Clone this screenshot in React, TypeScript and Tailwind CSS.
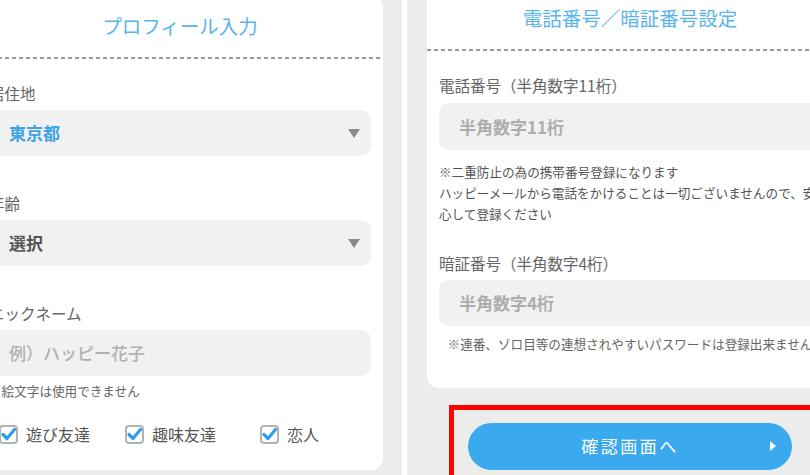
import React from "react";

const Triangle = () => (
  <svg width="12" height="9" viewBox="0 0 12 9" className="shrink-0">
    <polygon points="0,0 12,0 6,9" fill="#8a8a8a" />
  </svg>
);

const Check = ({ label, w }: { label: string; w?: string }) => (
  <div className={`flex items-center gap-[8px] shrink-0 ${w ?? ""}`}>
    <div className="relative w-[19px] h-[19px] rounded-[4px] border-2 border-[#b3b3b3] bg-white shrink-0">
      <svg width="19" height="19" viewBox="0 0 19 19" className="absolute left-[-2px] top-[-2px]">
        <polyline points="4,9.5 8,13.5 15.5,4.5" fill="none" stroke="#2e9fea" strokeWidth="3.2" strokeLinecap="round" strokeLinejoin="round" />
      </svg>
    </div>
    <span className="text-[16px] leading-[24px] text-[#555]">{label}</span>
  </div>
);

const Title = ({ text }: { text: string }) => (
  <>
    <div className="h-[61px] pb-[2px] flex items-center justify-center text-[19.5px] text-[#5ab4ec] whitespace-nowrap">
      {text}
    </div>
    <div className="h-[2px] bg-[repeating-linear-gradient(90deg,#9a9a9a_0_4px,transparent_4px_7px)]" />
  </>
);

const Label = ({ text, cls }: { text: string; cls?: string }) => (
  <div className={`text-[15.5px] leading-[20px] text-[#666] whitespace-nowrap ${cls ?? ""}`}>{text}</div>
);

export default function App() {
  return (
    <div className="w-[810px] h-[475px] overflow-hidden flex bg-[#ececec] font-['Noto_Sans_CJK_JP','Noto_Sans',sans-serif]">
      {/* left phone */}
      <div className="w-[445px] ml-[-43px] shrink-0 bg-[#ececec]">
        <div className="ml-[20px] w-[406px] mt-[-4px] bg-white rounded-[12px]">
          <Title text="プロフィール入力" />
          <div className="px-3 pt-[24px] pb-[24px]">
            <Label text="居住地" />
            <div className="mt-[7px] h-[46px] rounded-[10px] bg-[#f1f1f1] flex items-center justify-between pl-[20px] pr-[11px]">
              <span className="text-[17px] font-bold text-[#3ba3e6]">東京都</span>
              <Triangle />
            </div>
            <Label text="年齢" cls="mt-[37px]" />
            <div className="mt-[7px] h-[46px] rounded-[10px] bg-[#f1f1f1] flex items-center justify-between pl-[20px] pr-[11px]">
              <span className="text-[17px] font-bold text-[#555]">選択</span>
              <Triangle />
            </div>
            <Label text="ニックネーム" cls="mt-[37px]" />
            <div className="mt-[7px] h-[46px] rounded-[10px] bg-[#f1f1f1] flex items-center pl-[20px]">
              <span className="text-[17px] font-medium text-[#b0b0b0]">例）ハッピー花子</span>
            </div>
            <div className="mt-[4px] text-[12.6px] leading-[21px] text-[#666]">※絵文字は使用できません</div>
            <div className="mt-[21px] h-[24px] flex items-center">
              <div className="w-[10px] shrink-0" />
              <Check label="遊び友達" w="w-[126px]" />
              <Check label="趣味友達" w="w-[135px]" />
              <Check label="恋人" />
            </div>
          </div>
        </div>
      </div>

      {/* white gap */}
      <div className="w-[5px] shrink-0 bg-white" />

      {/* right phone */}
      <div className="w-[446px] shrink-0 bg-[#ececec] pl-[20px]">
        <div className="w-[406px] mt-[-12px] bg-white rounded-[12px]">
          <Title text="電話番号／暗証番号設定" />
          <div className="px-3 pt-[24px] pb-[34px]">
            <Label text="電話番号（半角数字11桁）" />
            <div className="mt-[8px] h-[46.5px] rounded-[10px] bg-[#f1f1f1] flex items-center pl-[20px]">
              <span className="text-[17px] font-bold text-[#adadad]">半角数字11桁</span>
            </div>
            <div className="mt-[11px] text-[12.6px] leading-[21px] text-[#555] whitespace-nowrap">
              ※二重防止の為の携帯番号登録になります
              <br />
              ハッピーメールから電話をかけることは一切ございませんので、安
              <br />
              心して登録ください
            </div>
            <Label text="暗証番号（半角数字4桁）" cls="mt-[29px]" />
            <div className="mt-[7.5px] h-[45.5px] rounded-[10px] bg-[#f1f1f1] flex items-center pl-[20px]">
              <span className="text-[17px] font-bold text-[#adadad]">半角数字4桁</span>
            </div>
            <div className="mt-[7px] text-[12.6px] leading-[21px] text-[#666] text-center whitespace-nowrap">
              ※連番、ゾロ目等の連想されやすいパスワードは登録出来ません
            </div>
          </div>
        </div>
        <div className="ml-[22px] mt-[17px] w-[372px] border-[5px] border-[#ff0000] pl-[14px] pt-[13px] pb-[20px]">
          <div className="relative w-[324px] h-[47px] rounded-full bg-[#3aa9ee] flex items-center justify-center">
            <span className="text-[17px] tracking-[2.5px] text-white">確認画面へ</span>
            <svg width="6" height="10" viewBox="0 0 6 10" className="absolute right-[16px] top-[18.5px]">
              <polygon points="0,0 6,5 0,10" fill="#ffffff" />
            </svg>
          </div>
        </div>
      </div>
    </div>
  );
}
